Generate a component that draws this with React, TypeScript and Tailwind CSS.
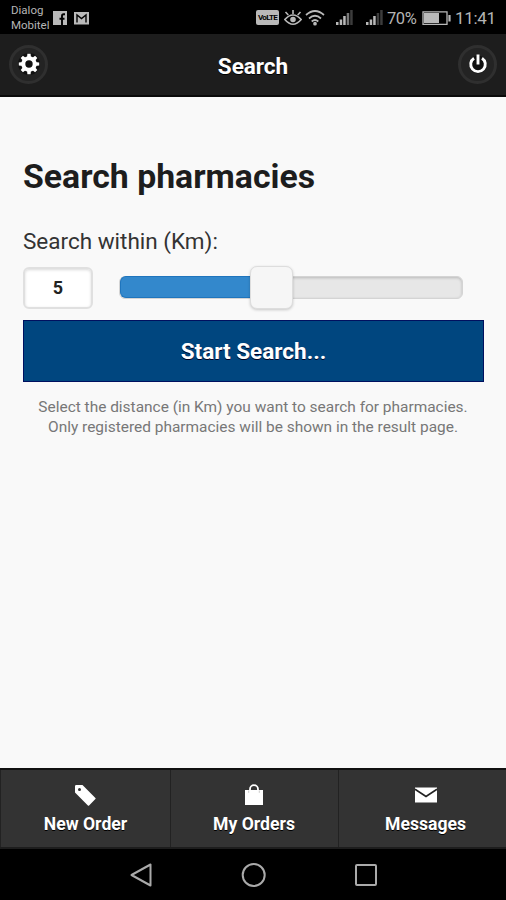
import React, { useState } from 'react';

const teeth = [0, 45, 90, 135, 180, 225, 270, 315];

function GearIcon() {
  return (
    <svg width="22" height="22" viewBox="0 0 22 22" fill="white">
      <circle cx="11" cy="11" r="11" fill="#111" />
      {teeth.map((angle) => (
        <path key={angle} d="M9 5 9.4 .8h3.2L13 5z" transform={`rotate(${angle} 11 11)`} />
      ))}
      <circle cx="11" cy="11" r="5.7" fill="none" stroke="white" strokeWidth="4" />
    </svg>
  );
}

function PowerIcon() {
  return (
    <svg width="20" height="20" viewBox="0 0 20 20" fill="none" stroke="white" strokeWidth="2.9">
      <circle cx="10" cy="10.5" r="9" fill="#111" stroke="none" />
      <path d="M6 4.2A7.3 7.3 0 1 0 14 4.2" />
      <path d="M10 .5v10" />
    </svg>
  );
}

function TagIcon() {
  return (
    <svg width="21" height="21" viewBox="0 0 14 14" fill="white">
      <path
        fillRule="evenodd"
        d="M5 0H.8Q0 0 0 .8V5l8.6 8.6Q9 14 9.4 13.6L13.6 9.4Q14 9 13.6 8.6zM3 4a1 1 0 1 1 0-2 1 1 0 0 1 0 2z"
      />
    </svg>
  );
}

function BagIcon() {
  return (
    <svg width="20" height="22" viewBox="0 0 20 22">
      <path d="M1 6h18v15H1z" fill="white" />
      <path d="M6 9V5.2a4 4 0 0 1 8 0V9" fill="none" stroke="white" strokeWidth="1.8" />
      <path d="M4.7 6.5v2.3M15.3 6.5v2.3" stroke="#bbb" strokeWidth=".8" />
    </svg>
  );
}

function MailIcon() {
  return (
    <svg width="22" height="16" viewBox="0 0 22 16">
      <path d="M0 .5h22v15H0z" fill="white" />
      <path d="M0 2.2 11 9.5 22 2.2" fill="none" stroke="#222" strokeWidth="1.7" />
    </svg>
  );
}

function SignalIcon({ level }: { level: number }) {
  return (
    <svg width="18" height="17" viewBox="0 0 18 17" fill="#b9b9b9">
      <path d="M0 13h2.5v3H0zM3.7 10.5h2.5v5.5H3.7zM7.2 7h2.5v9H7.2z" />
      <path d="M10.7 4h2.5v12h-2.5z" fill={level > 3 ? '#777' : '#3c3c3c'} />
      <path d="M14.2 1h2.5v15h-2.5z" fill="#3c3c3c" />
    </svg>
  );
}

function StatusBar() {
  return (
    <div className="flex h-[34px] items-start bg-black text-[#b5b5b5]">
      <div className="ml-[11px] mt-[3px] w-[41px] whitespace-nowrap text-[11.5px] leading-[15px]">
        <div>Dialog</div>
        <div>Mobitel</div>
      </div>
      <svg className="ml-[1px] mt-[11px]" width="14" height="14" viewBox="0 0 14 14">
        <path d="M0 0h14v14H0z" fill="#b9b9b9" />
        <path d="M12 3.2h-1.4Q9 3.2 9 5v9M6.5 7.7h5" fill="none" stroke="black" strokeWidth="1.9" />
      </svg>
      <svg className="ml-[7px] mt-[12px]" width="15" height="13" viewBox="0 0 15 13">
        <path d="M0 0h15v12.5H0z" fill="#b9b9b9" />
        <path d="M3 10.5V3l4.5 3.5L12 3v7.5" fill="none" stroke="black" strokeWidth="1.4" />
      </svg>
      <div className="ml-[167px] mt-[10px] flex h-[15px] w-[23px] items-center justify-center rounded-[2px] bg-[#b9b9b9] text-[8px] font-bold tracking-[-0.7px] text-black">
        VoLTE
      </div>
      <svg className="ml-[5px] mt-[9px]" width="18" height="17" viewBox="0 0 18 17" fill="none" stroke="#b9b9b9" strokeWidth="1.6">
        <path d="M.8 10.5Q9 1.5 17.2 10.5Q9 20 .8 10.5zM9 5V1M4.3 6 1.5 3M13.7 6l2.8-3" />
        <circle cx="9" cy="10.5" r="2" fill="#b9b9b9" />
      </svg>
      <svg className="ml-[3px] mt-[10px]" width="20" height="16" viewBox="0 0 20 16" fill="none" stroke="#b9b9b9" strokeWidth="1.7">
        <path d="M1 5Q10-3 19 5M4 8.5Q10 3 16 8.5M6.7 11.5Q10 8.5 13.3 11.5" />
        <circle cx="10" cy="13.7" r="1" fill="#b9b9b9" />
      </svg>
      <div className="ml-[11px] mt-[9px]">
        <SignalIcon level={4} />
      </div>
      <div className="ml-[12px] mt-[9px]">
        <SignalIcon level={3} />
      </div>
      <span className="ml-[3px] mt-[9px] w-[31px] whitespace-nowrap text-[16.5px] leading-5 tracking-[-0.4px]">70%</span>
      <svg className="ml-[4px] mt-[11px]" width="30" height="15" viewBox="0 0 30 15">
        <path d="M1 .8h24v12.6H1z" fill="none" stroke="#b9b9b9" strokeWidth="1.3" />
        <path d="M2 2h15v10H2z" fill="#b9b9b9" />
        <path d="M27.5 4v6.5" stroke="#b9b9b9" strokeWidth="2.2" />
      </svg>
      <span className="ml-[3px] mt-[8px] whitespace-nowrap text-[17px] leading-5 tracking-[-0.3px]">11:41</span>
    </div>
  );
}

const tabs = [
  { name: 'New Order', icon: <TagIcon />, style: 'w-[171px] border-x border-[#222]' },
  { name: 'My Orders', icon: <BagIcon />, style: 'w-[168px] border-r border-[#222] pr-px' },
  { name: 'Messages', icon: <MailIcon />, style: 'w-[167px] pl-1.5' },
];

export default function App() {
  const [distance] = useState(5);

  return (
    <div className="flex h-[900px] w-[506px] flex-col overflow-hidden bg-[#f9f9f9] font-['Roboto',sans-serif]">
      <StatusBar />

      <header className="flex h-[63px] items-center justify-between border-b-2 border-[#0a0a0a] bg-[#1d1d1d] px-[9px]">
        <button className="mb-[1px] flex size-[39px] items-center justify-center rounded-full border-[3px] border-[#2f2f2f] bg-[#232323]">
          <GearIcon />
        </button>
        <h1 className="mt-1 text-[22.5px] font-bold text-white [text-shadow:0_1px_0_#000]">Search</h1>
        <button className="mb-[1px] flex size-[39px] items-center justify-center rounded-full border-[3px] border-[#2f2f2f] bg-[#232323]">
          <PowerIcon />
        </button>
      </header>

      <main className="flex-1 px-[23px] pt-[59px]">
        <h2 className="text-[33.8px] font-bold leading-[42px] text-[#1d1d1d]">Search pharmacies</h2>
        <div className="mt-[29px] text-[22.5px] leading-7 text-[#333]">Search within (Km):</div>

        <div className="mt-[10px] flex h-[44px] items-center">
          <div className="mt-[1px] flex h-[42px] w-[70px] items-center justify-center rounded-[6px] border-2 border-[#e0e0e0] bg-white text-[18px] font-bold text-[#222] shadow-[inset_0_1px_3px_rgba(0,0,0,0.15)]">
            {distance}
          </div>
          <div className="ml-[26px] flex h-[23px] w-[344px] items-center rounded-[6px] border border-[#d4d4d4] bg-[#e7e7e7] shadow-[inset_0_1px_3px_rgba(0,0,0,0.2)]">
            <div className="h-[22px] w-[130px] shrink-0 rounded-l-[6px] border-y border-l border-[#1f75bd] bg-[#3388cc]" />
            <div className="h-[43px] w-[43px] shrink-0 rounded-[7px] border border-[#ddd] bg-[#f6f6f6] shadow-[0_1px_3px_rgba(0,0,0,0.2)]" />
          </div>
        </div>

        <button className="mt-[11px] block h-[62px] w-[461px] border border-[#00105f] bg-[#00467f] pt-0.5 text-[22.5px] font-bold text-white [text-shadow:0_1px_0_#002]">
          Start Search...
        </button>
        <p className="mt-[15px] whitespace-nowrap text-center text-[15.45px] leading-[20px] text-[#777]">
          Select the distance (in Km) you want to search for pharmacies.
          <br />
          Only registered pharmacies will be shown in the result page.
        </p>
      </main>

      <footer className="flex h-[81px] border-y-2 border-t-[#111] border-b-[#1d1d1d] bg-[#333]">
        {tabs.map((tab) => (
          <div key={tab.name} className={`flex flex-col items-center pt-[13px] ${tab.style}`}>
            <div className="flex h-[24px] items-center">{tab.icon}</div>
            <span className="mt-[5px] text-[17.6px] font-bold leading-6 text-white [text-shadow:0_1px_0_#000]">{tab.name}</span>
          </div>
        ))}
      </footer>

      <nav className="flex h-[51px] items-center bg-black pl-[129px]">
        <svg width="24" height="26" viewBox="0 0 24 26" fill="none" stroke="#aaa" strokeWidth="2" strokeLinejoin="round">
          <path d="M2.5 13 21.5 2.5v21z" />
        </svg>
        <svg className="ml-[88px]" width="26" height="26" viewBox="0 0 26 26" fill="none" stroke="#aaa" strokeWidth="2">
          <circle cx="12.7" cy="13" r="11" />
        </svg>
        <div className="ml-[88px] size-[22px] rounded-[2px] border-2 border-[#aaa]" />
      </nav>
    </div>
  );
}
